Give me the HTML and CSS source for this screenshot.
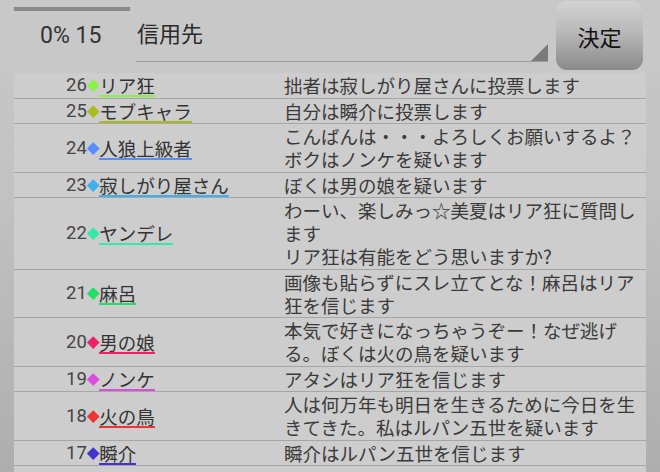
FILE: index.html
```html
<!DOCTYPE html>
<html lang="ja">
<head>
<meta charset="utf-8">
<link rel="stylesheet" href="styles.css">
</head>
<body>
<div class="page">
  <header class="top">
    <div class="status">
      <div class="progress"></div>
      <div class="count">0% 15</div>
    </div>
    <div class="field">
      <span class="field-text">信用先</span>
      <span class="corner"></span>
    </div>
    <button class="ok">決定</button>
  </header>
  <div class="list">
    <div class="row">
      <div class="who"><span class="num">26</span><span class="dia c26"></span><span class="name c26">リア狂</span></div>
      <div class="msg">拙者は寂しがり屋さんに投票します</div>
    </div>
    <div class="row">
      <div class="who"><span class="num">25</span><span class="dia c25"></span><span class="name c25">モブキャラ</span></div>
      <div class="msg">自分は瞬介に投票します</div>
    </div>
    <div class="row">
      <div class="who"><span class="num">24</span><span class="dia c24"></span><span class="name c24">人狼上級者</span></div>
      <div class="msg">こんばんは・・・よろしくお願いするよ？<br>ボクはノンケを疑います</div>
    </div>
    <div class="row">
      <div class="who"><span class="num">23</span><span class="dia c23"></span><span class="name c23">寂しがり屋さん</span></div>
      <div class="msg">ぼくは男の娘を疑います</div>
    </div>
    <div class="row">
      <div class="who"><span class="num">22</span><span class="dia c22"></span><span class="name c22">ヤンデレ</span></div>
      <div class="msg">わーい、楽しみっ☆美夏はリア狂に質問します<br>リア狂は有能をどう思いますか?</div>
    </div>
    <div class="row">
      <div class="who"><span class="num">21</span><span class="dia c21"></span><span class="name c21">麻呂</span></div>
      <div class="msg">画像も貼らずにスレ立てとな！麻呂はリア狂を信じます</div>
    </div>
    <div class="row">
      <div class="who"><span class="num">20</span><span class="dia c20"></span><span class="name c20">男の娘</span></div>
      <div class="msg">本気で好きになっちゃうぞー！なぜ逃げる。ぼくは火の鳥を疑います</div>
    </div>
    <div class="row">
      <div class="who"><span class="num">19</span><span class="dia c19"></span><span class="name c19">ノンケ</span></div>
      <div class="msg">アタシはリア狂を信じます</div>
    </div>
    <div class="row">
      <div class="who"><span class="num">18</span><span class="dia c18"></span><span class="name c18">火の鳥</span></div>
      <div class="msg">人は何万年も明日を生きるために今日を生きてきた。私はルパン五世を疑います</div>
    </div>
    <div class="row">
      <div class="who"><span class="num">17</span><span class="dia c17"></span><span class="name c17">瞬介</span></div>
      <div class="msg">瞬介はルパン五世を信じます</div>
    </div>
    <div class="row tail"></div>
  </div>
</div>
</body>
</html>
```
FILE: styles.css
```css
* { box-sizing: border-box; }
html, body { margin: 0; padding: 0; }
body {
  width: 660px;
  height: 472px;
  overflow: hidden;
  background: linear-gradient(to bottom, #c9c9c9 0%, #c2c2c2 40%, #aeaeae 100%);
  font-family: Roboto, "Noto Sans CJK JP", sans-serif;
  color: #333;
}
.page {
  display: flex;
  flex-direction: column;
  height: 472px;
}
.top {
  display: flex;
  height: 73px;
  flex: none;
  background: #c8c8c8;
}
.status {
  width: 122px;
  margin-left: 14px;
}
.progress {
  margin-top: 7px;
  width: 116px;
  height: 4px;
  background: #8a8a8a;
}
.count {
  margin-top: 10px;
  padding-left: 26px;
  font-size: 23px;
  line-height: 30px;
  color: #333;
}
.field {
  position: relative;
  width: 412px;
  height: 62px;
  border-bottom: 1px solid #9c9c9c;
}
.field-text {
  display: block;
  margin-top: 17px;
  padding-left: 1px;
  font-family: "Noto Sans CJK JP", sans-serif;
  font-size: 22px;
  line-height: 30px;
  color: #2a2a2a;
}
.corner {
  position: absolute;
  right: 0;
  bottom: 0;
  width: 0;
  height: 0;
  border-left: 17px solid transparent;
  border-bottom: 17px solid #7a7a7a;
}
.ok {
  margin: 1px 0 0 8px;
  width: 87px;
  height: 69px;
  border: none;
  border-radius: 11px;
  background: linear-gradient(to bottom, #d3d3d3 0%, #b8b8b8 45%, #8a8a8a 100%);
  font-family: "Noto Sans CJK JP", sans-serif;
  font-size: 22px;
  color: #111;
  padding: 0;
}
.list {
  margin: 0 14px;
  background: #cdcdcd;
  flex: 1;
  overflow: hidden;
}
.row {
  display: grid;
  grid-template-columns: 270px 1fr;
  border-bottom: 1px solid #a6a6a6;
}
.row.tail { height: 26px; }
.who {
  display: flex;
  align-items: center;
  padding-left: 52px;
  font-size: 18.5px;
  height: 100%;
}
.num {
  color: #444;
  line-height: 20px;
}
.dia {
  width: 8.5px;
  height: 8.5px;
  margin: 0 2px;
  transform: rotate(45deg);
  flex: none;
}
.name {
  font-family: "Noto Sans CJK JP", sans-serif;
  line-height: 20px;
  border-bottom: 2.5px solid;
  color: #333;
  margin-top: 2px;
}
.msg {
  font-family: "Noto Sans CJK JP", sans-serif;
  font-size: 18.5px;
  line-height: 23px;
  padding: 1px 0 0.5px;
  color: #3a3a3a;
}
.dia.c26 { background: #8cf04a; }
.name.c26 { border-color: #8cf04a; }
.dia.c25 { background: #aabb22; }
.name.c25 { border-color: #aabb22; }
.dia.c24 { background: #5a8cff; }
.name.c24 { border-color: #5a8cff; }
.dia.c23 { background: #3fb0ee; }
.name.c23 { border-color: #3fb0ee; }
.dia.c22 { background: #33eaaa; }
.name.c22 { border-color: #33eaaa; }
.dia.c21 { background: #22dd66; }
.name.c21 { border-color: #22dd66; }
.dia.c20 { background: #ee2266; }
.name.c20 { border-color: #ee2266; }
.dia.c19 { background: #dd4ddd; }
.name.c19 { border-color: #dd4ddd; }
.dia.c18 { background: #ee3333; }
.name.c18 { border-color: #ee3333; }
.dia.c17 { background: #4433cc; }
.name.c17 { border-color: #4433cc; }
```
